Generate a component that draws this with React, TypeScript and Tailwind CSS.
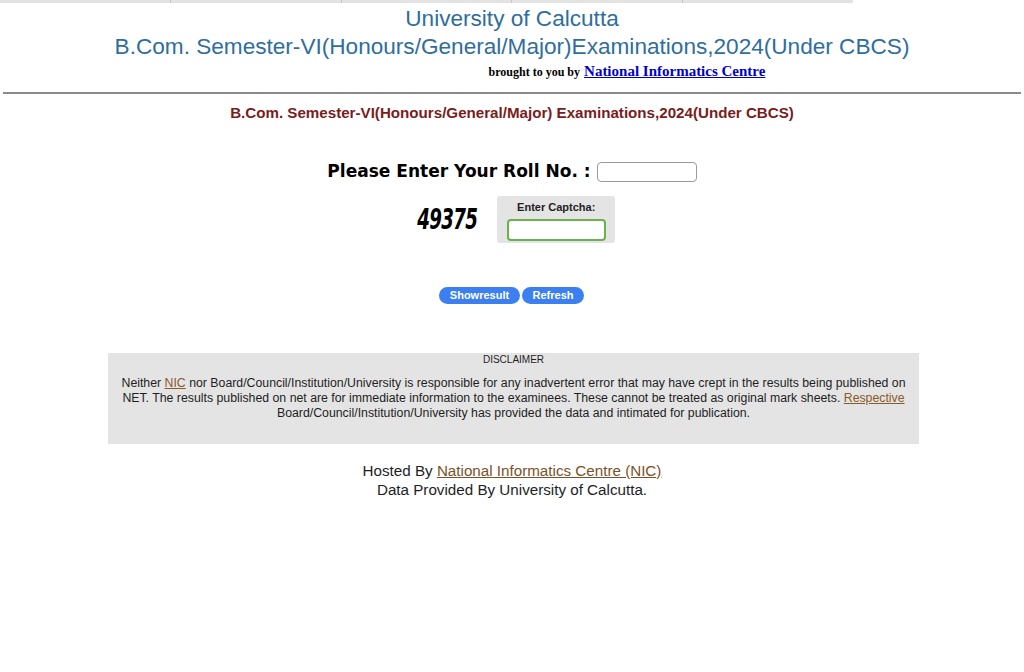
import React from "react";

export default function App() {
  return (
    <div className="w-[1024px] h-[672px] bg-white overflow-hidden relative" style={{ fontFamily: '"Liberation Sans", Arial, sans-serif' }}>
      <div className="flex w-[853px] h-[3px]">
        <div className="flex-1 bg-[#e3e3e3] border-r border-[#c8c8c8]" />
        <div className="flex-1 bg-[#e3e3e3] border-r border-[#c8c8c8]" />
        <div className="flex-1 bg-[#e3e3e3] border-r border-[#c8c8c8]" />
        <div className="flex-1 bg-[#e3e3e3] border-r border-[#c8c8c8]" />
        <div className="flex-1 bg-[#e3e3e3]" />
      </div>
      <div className="flex flex-col items-center text-[#2f6e9c] text-[22.6px] leading-[28px] pt-[2px]">
        <div>University of Calcutta</div>
        <div>B.Com. Semester-VI(Honours/General/Major)Examinations,2024(Under CBCS)</div>
      </div>
      <div className="flex justify-center pl-[230px] mt-[1px] items-baseline leading-[18px]" style={{ fontFamily: '"Liberation Serif", serif' }}>
        <span className="text-[12px] font-bold text-black mr-[4px]">brought to you by</span>
        <span className="text-[15px] font-bold text-[#0000cc] underline">National Informatics Centre</span>
      </div>
      <div className="mx-[3px] mt-[11px] h-[2px] bg-[#8a8a8a]" />
      <div className="text-center text-[#7a1c1c] font-bold text-[15.15px] leading-[18px] mt-[10px]">
        B.Com. Semester-VI(Honours/General/Major) Examinations,2024(Under CBCS)
      </div>
      <div className="flex justify-center items-center mt-[37px]">
        <span className="font-bold text-[17.05px] leading-[22px] text-black mr-[6px]" style={{ fontFamily: '"DejaVu Sans", Verdana, sans-serif' }}>Please Enter Your Roll No. :</span>
        <div className="w-[100px] h-[20px] border border-[#9a9a9a] rounded-[4px] bg-white mt-[3px]" />
      </div>
      <div className="flex justify-center items-center mt-[14px] pr-[8px]">
        <span className="italic font-bold text-[28px] leading-[32px] text-black mr-[4px] tracking-[-1px] inline-block scale-x-[0.65]" style={{ fontFamily: '"DejaVu Sans", sans-serif' }}>49375</span>
        <div className="w-[118px] h-[47px] bg-[#e4e4e4] rounded-[3px] flex flex-col items-center pt-[3px]">
          <span className="text-[11px] font-bold text-[#222]">Enter Captcha:</span>
          <div className="w-[99px] h-[22px] border-2 border-[#6ab04c] rounded-[4px] bg-white mt-[3px]" />
        </div>
      </div>
      <div className="flex justify-center gap-[2px] mt-[44px] pr-[1px]">
        <div className="w-[81px] h-[17px] rounded-full bg-[#3b7ff0] text-white text-[11px] font-bold flex items-center justify-center">Showresult</div>
        <div className="w-[62px] h-[17px] rounded-full bg-[#3b7ff0] text-white text-[11px] font-bold flex items-center justify-center">Refresh</div>
      </div>
      <div className="mx-[108px] w-[811px] mt-[49px] h-[91px] bg-[#e4e4e4] px-[6px] pt-[1px] text-center text-[#1e1e1e]">
        <div className="text-[10px] leading-[12px] mt-[0px]">DISCLAIMER</div>
        <div className="text-[12.3px] leading-[15px] mt-[10px]">
          Neither <span className="text-[#8b5a2b] underline">NIC</span> nor Board/Council/Institution/University is responsible for any inadvertent error that may have crept in the results being published on NET. The results published on net are for immediate information to the examinees. These cannot be treated as original mark sheets. <span className="text-[#8b5a2b] underline">Respective</span> Board/Council/Institution/University has provided the data and intimated for publication.
        </div>
      </div>
      <div className="text-center text-[15.2px] leading-[19px] text-[#1e1e1e] mt-[17px]">
        <div>Hosted By <span className="text-[#7d5127] underline">National Informatics Centre (NIC)</span></div>
        <div>Data Provided By University of Calcutta.</div>
      </div>
    </div>
  );
}
